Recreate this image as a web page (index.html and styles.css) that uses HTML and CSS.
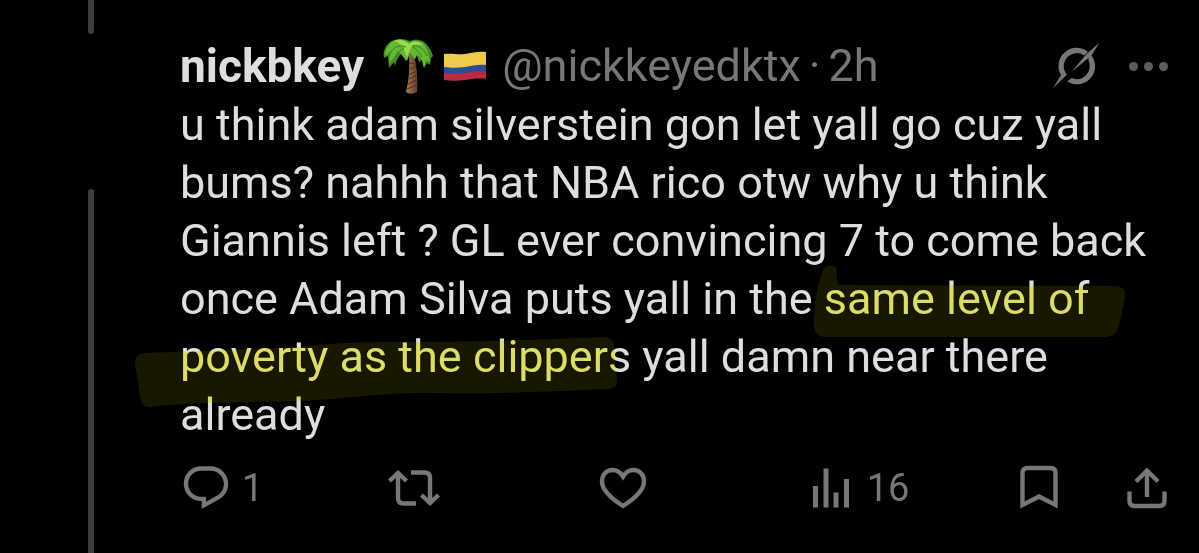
FILE: index.html
```html
<!DOCTYPE html>
<html lang="en">
<head>
  <meta charset="UTF-8">
  <meta name="viewport" content="width=device-width, initial-scale=1.0">
  <title>nickbkey</title>
  <link rel="stylesheet" href="styles.css">
</head>
<body>
  <article class="tweet">
    <div class="thread">
      <div class="thread-line top"></div>
      <div class="thread-line bottom"></div>
    </div>
    <div class="content">
      <header class="header">
        <span class="name">nickbkey</span>
        <svg class="palm" viewBox="0 0 52 56" role="img" aria-label="palm tree">
          <defs>
            <linearGradient id="trunk" x1="0" x2="1" y1="0" y2="0">
              <stop offset="0" stop-color="#a97c58"/>
              <stop offset="1" stop-color="#5d3c25"/>
            </linearGradient>
          </defs>
          <path fill="url(#trunk)" d="M27 17h5c3 12 4 25 3 37-3 2-8 2-11 0 3-12 4-25 3-37z"/>
          <path fill="none" stroke="#4b301c" d="M28 25l5 1M28 31l6-3M28 36l7-3M27 41l8-4M26 46l9-4M25 51l10-4"/>
          <path fill="#3f8f24" d="M28 3C20-1 9 1 5 7 2 11 1 16 2 20l4-2 1 12 5-6 1 4c1-5 3-9 6-12l5 7 3-7 5 5 3-3 2 6 3-2 2 8 3-5 3 2 1-7 2-2C49 12 46 6 40 3 36 1 32 1 28 3z"/>
          <path fill="#68b835" d="M27 5C20 0 10 2 7 7c-3 4-4 7-4 11l5-4-1 12 7-9 2-4 4 4 5 6 3-8 5 6 2-5 5 6 2 8 2-8 4 2C46 12 43 6 39 4c-4-2-9-1-12 1z"/>
          <path fill="#9ad952" d="M27 6C22 1 16 1 12 3c4 1 7 3 9 6l4 10 4-10c3-3 8-3 12-2-3-4-10-5-14-1z"/>
          <path fill="none" stroke="#357d20" d="M24 9c-8-3-14 1-17 9M30 8c7-1 12 3 15 10M22 10c-4 2-7 5-9 9M31 9c4 3 7 6 9 10"/>
        </svg>
        <svg class="flag" viewBox="0 0 42 30" role="img" aria-label="Colombia">
          <path fill="#efcb4c" d="M0 3c8-1 14 1 21 0s13-3 21-2v14c-8-1-14 1-21 2s-13 1-21 0z"/>
          <path fill="#2c4c97" d="M0 16c8 1 14 1 21 0s13-3 21-2v8c-8-1-14 1-21 2s-13 0-21-1z"/>
          <path fill="#b92c40" d="M0 22c8 1 14 1 21 0s13-2 21-1v7c-8-1-14 0-21 1s-13 1-21 0z"/>
        </svg>
        <span class="handle">@nickkeyedktx</span>
        <span class="dot">·</span>
        <time class="time">2h</time>
        <div class="header-actions">
          <button class="grok" aria-label="Grok">
            <svg viewBox="0 0 48 48">
              <path d="M0 46L8 33A18 18 0 0 1 35 10L31 13.4A13 13 0 0 0 12.5 30.8L14 32.5z"/>
              <path d="M46.5 .5L38.5 13.5A18 18 0 0 1 14.3 39.4L18.5 36A13 13 0 0 0 35.5 18.5V16L18.5 30 33 12.5z"/>
            </svg>
          </button>
          <button class="more" aria-label="More"><i></i><i></i><i></i></button>
        </div>
      </header>
      <div class="text">
        <p>u think adam silverstein gon let yall go cuz yall<br>
        bums? nahhh that NBA rico otw why u think<br>
        Giannis left ? GL ever convincing 7 to come back<br>
        once Adam Silva puts yall in the same level of<br>
        poverty as the clippers yall damn near there<br>
        already</p>
        <!-- marker strokes: one layer tints the letters, one lifts the black -->
        <svg class="marker tint" viewBox="0 0 1060 348">
          <defs>
            <g id="strokes">
              <path d="M692 172q6-5 12 0l2 17 276 1q13 0 11 12l-6 28q-3 11-14 11H694q-12 0-12-12 0-34 10-57z"/>
              <path d="M12 257q80-3 156-6 40-5 80-5 120 0 224-5 9 0 10 8l3 36q0 8-10 8-90 5-180 4c-50 0-80 6-127 8-60 2-100 0-150 6q-9 0-10-10l-5-34q0-9 9-10z"/>
            </g>
          </defs>
          <use href="#strokes"/>
        </svg>
        <svg class="marker glow" viewBox="0 0 1060 348">
          <use href="#strokes"/>
        </svg>
      </div>
      <footer class="actions">
        <button class="action" aria-label="Reply">
          <svg viewBox="0 0 24 24"><path class="solid" d="M1.75 10c0-4.42 3.58-8 8-8h4.37c4.49 0 8.13 3.64 8.13 8.13 0 2.96-1.61 5.68-4.2 7.11L10 21.7v-3.69h-.07c-4.49.1-8.18-3.51-8.18-8.01zm8-6c-3.31 0-6 2.69-6 6 0 3.37 2.77 6.08 6.14 6.01l.35-.01H12v2.3l5.09-2.81c1.95-1.08 3.16-3.13 3.16-5.36C20.25 6.74 17.5 4 14.12 4z"/></svg>
          <span>1</span>
        </button>
        <button class="action" aria-label="Repost">
          <svg viewBox="0 0 52 52"><path d="M1.5 19L10 11l8.500 8M10 12v24q0 5.500 5.500 5.500H28M23 10.500h13.500q5.500 0 5.500 5.500v24M33.500 33L42 41l8.500-8"/></svg>
        </button>
        <button class="action" aria-label="Like">
          <svg viewBox="0 0 52 52"><path d="M26 44C12 35 5 27 5 19.500 5 12 10 8 15.500 8 20 8 23.500 10.500 26 14.500 28.500 10.500 32 8 36.500 8 42 8 47 12 47 19.500 47 27 40 35 26 44z"/></svg>
        </button>
        <button class="action" aria-label="Views">
          <svg viewBox="0 0 52 52"><path class="solid" d="M8 24h5v21.500H8zM18.500 6.500h5v39h-5zM28.500 30.500h5v15h-5zM39 17h5v28.500h-5z"/></svg>
          <span>16</span>
        </button>
        <div class="action-end">
          <button class="action" aria-label="Bookmark">
            <svg viewBox="0 0 52 52"><path d="M9.500 43V11q0-5 5-5h23q5 0 5 5v32L26 34.500z"/></svg>
          </button>
          <button class="action" aria-label="Share">
            <svg viewBox="0 0 52 52"><path d="M26 35V8M15 19.500L26 8.500l11 11M8.500 29.500V39q0 5 5 5h25q5 0 5-5v-9.500"/></svg>
          </button>
        </div>
      </footer>
    </div>
  </article>
</body>
</html>
```
FILE: styles.css
```css
* { box-sizing: border-box; }
html, body {
  margin: 0;
  padding: 0;
  min-height: 100%;
  background: #000;
}
body {
  font-family: Roboto, "Liberation Sans", sans-serif;
  font-size: 45px;
  line-height: 58px;
  color: #dedede;
  overflow: hidden;
}
button {
  background: none;
  border: none;
  padding: 0;
  margin: 0;
  font: inherit;
  color: inherit;
  cursor: pointer;
}
.tweet {
  display: flex;
  min-height: 100vh;
}
.thread {
  width: 180px;
  flex: none;
  display: flex;
  flex-direction: column;
  align-items: center;
  gap: 155px;
  padding-left: 2px;
}
.thread-line {
  width: 6px;
  background: #3c3d40;
}
.thread-line.top {
  height: 34px;
  border-radius: 0 0 3px 3px;
}
.thread-line.bottom {
  flex: 1;
  border-radius: 3px 3px 0 0;
}
.content {
  flex: 1;
  padding: 36px 26px 0 0;
}
.header {
  display: flex;
  align-items: center;
  height: 60px;
  color: #76777b;
  white-space: nowrap;
}
.name {
  font-size: 46px;
  font-weight: 700;
  color: #dedede;
}
.palm {
  width: 52px;
  height: 56px;
  margin-left: 18px;
}
.flag {
  width: 42px;
  height: 30px;
  margin-left: 10px;
}
.handle {
  margin-left: 16px;
}
.dot {
  margin: 0 8px;
}
.header-actions {
  margin-left: auto;
  display: flex;
  align-items: center;
  gap: 28px;
  padding-right: 5px;
}
.grok svg {
  display: block;
  width: 48px;
  height: 48px;
  fill: #76777b;
}
.more {
  display: flex;
  gap: 6px;
}
.more i {
  width: 9px;
  height: 9px;
  border-radius: 50%;
  background: #5c5d61;
}
.text {
  position: relative;
}
.text p {
  margin: 0;
  white-space: nowrap;
}
.marker {
  position: absolute;
  top: 0;
  left: -48px;
  width: 1060px;
  height: 348px;
  pointer-events: none;
}
.tint {
  fill: #f8f878;
  mix-blend-mode: multiply;
}
.glow {
  fill: #181700;
  mix-blend-mode: screen;
}
.actions {
  display: flex;
  margin-top: 18px;
  color: #76777b;
  font-size: 38px;
}
.action {
  flex: 1;
  display: flex;
  align-items: center;
  gap: 10px;
  line-height: 52px;
}
.action svg {
  display: block;
  width: 52px;
  height: 52px;
  fill: none;
  stroke: #76777b;
  stroke-width: 4.4;
}
.action svg .solid {
  fill: #76777b;
  stroke: none;
}
.action-end {
  display: flex;
  gap: 56px;
}
```
